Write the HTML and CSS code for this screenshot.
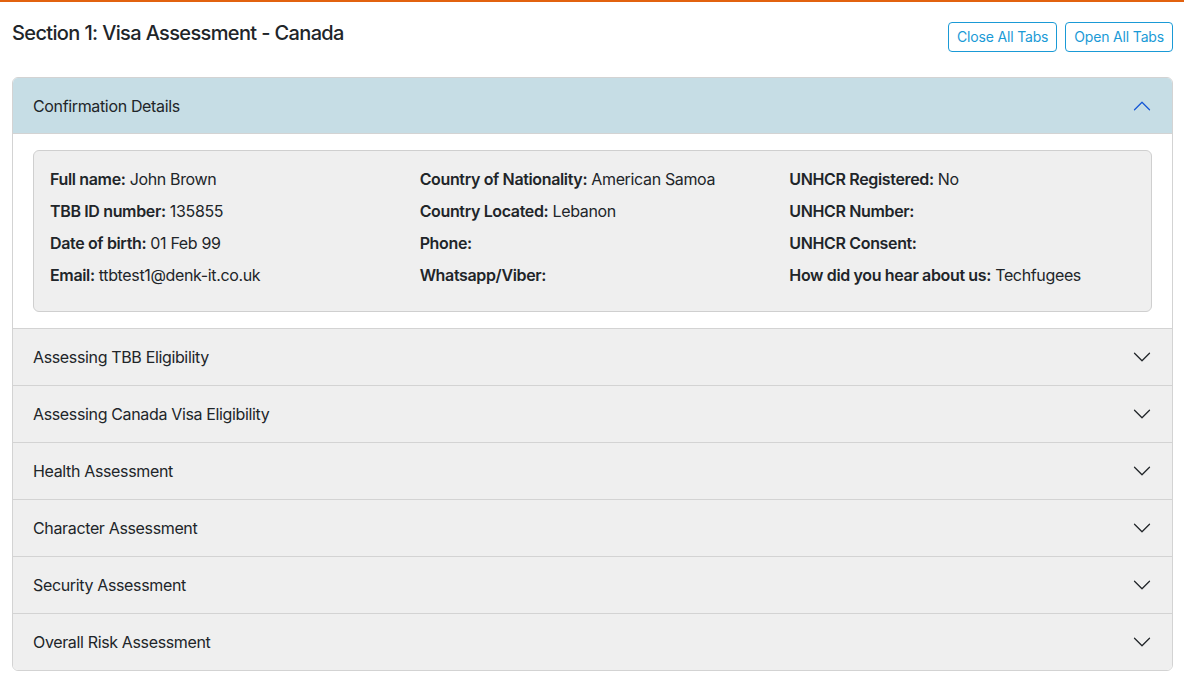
FILE: index.html
```html
<!DOCTYPE html>
<html>
<head>
<meta charset="utf-8">
<link rel="stylesheet" href="styles.css">
</head>
<body>
<div class="page">
  <div class="page-head">
    <h5 class="title">Section 1: Visa Assessment - Canada</h5>
    <div class="actions">
      <button class="btn-outline">Close All Tabs</button>
      <button class="btn-outline">Open All Tabs</button>
    </div>
  </div>

  <div class="accordion">
    <div class="acc-item">
      <div class="acc-btn open">
        <span>Confirmation Details</span>
        <svg class="chev" viewBox="0 0 16 16" fill="none" stroke="currentColor" stroke-linecap="round" stroke-linejoin="round"><path d="M2 11L8 5L14 11"/></svg>
      </div>
      <div class="acc-body">
        <div class="card">
          <div class="grid">
            <div class="col">
              <p><b>Full name:</b> John Brown</p>
              <p><b>TBB ID number:</b> 135855</p>
              <p><b>Date of birth:</b> 01 Feb 99</p>
              <p><b>Email:</b> ttbtest1@denk-it.co.uk</p>
            </div>
            <div class="col">
              <p><b>Country of Nationality:</b> American Samoa</p>
              <p><b>Country Located:</b> Lebanon</p>
              <p><b>Phone:</b> </p>
              <p><b>Whatsapp/Viber:</b> </p>
            </div>
            <div class="col">
              <p><b>UNHCR Registered:</b> No</p>
              <p><b>UNHCR Number:</b> </p>
              <p><b>UNHCR Consent:</b> </p>
              <p><b>How did you hear about us:</b> Techfugees</p>
            </div>
          </div>
        </div>
      </div>
    </div>
    <div class="acc-item"><div class="acc-btn"><span>Assessing TBB Eligibility</span><svg class="chev" viewBox="0 0 16 16" fill="none" stroke="currentColor" stroke-linecap="round" stroke-linejoin="round"><path d="M2 5L8 11L14 5"/></svg></div></div>
    <div class="acc-item"><div class="acc-btn"><span>Assessing Canada Visa Eligibility</span><svg class="chev" viewBox="0 0 16 16" fill="none" stroke="currentColor" stroke-linecap="round" stroke-linejoin="round"><path d="M2 5L8 11L14 5"/></svg></div></div>
    <div class="acc-item"><div class="acc-btn"><span>Health Assessment</span><svg class="chev" viewBox="0 0 16 16" fill="none" stroke="currentColor" stroke-linecap="round" stroke-linejoin="round"><path d="M2 5L8 11L14 5"/></svg></div></div>
    <div class="acc-item"><div class="acc-btn"><span>Character Assessment</span><svg class="chev" viewBox="0 0 16 16" fill="none" stroke="currentColor" stroke-linecap="round" stroke-linejoin="round"><path d="M2 5L8 11L14 5"/></svg></div></div>
    <div class="acc-item"><div class="acc-btn"><span>Security Assessment</span><svg class="chev" viewBox="0 0 16 16" fill="none" stroke="currentColor" stroke-linecap="round" stroke-linejoin="round"><path d="M2 5L8 11L14 5"/></svg></div></div>
    <div class="acc-item"><div class="acc-btn"><span>Overall Risk Assessment</span><svg class="chev" viewBox="0 0 16 16" fill="none" stroke="currentColor" stroke-linecap="round" stroke-linejoin="round"><path d="M2 5L8 11L14 5"/></svg></div></div>
  </div>
</div>
</body>
</html>
```

FILE: styles.css
```css
* { box-sizing: border-box; }
html, body { margin: 0; padding: 0; }
body {
  font-family: Inter, "Noto Sans", "Liberation Sans", sans-serif;
  font-size: 16px;
  line-height: 1.5;
  letter-spacing: -0.022em;
  color: #212529;
  background: #fff;
  border-top: 2px solid #e2620f;
}
.page { padding: 0 11px 0 12px; }
.page-head {
  display: flex;
  justify-content: space-between;
  align-items: flex-start;
  padding-top: 19px;
  margin-bottom: 25px;
}
.title {
  margin: 0;
  font-size: 20px;
  font-weight: 500;
  line-height: 24px;
  letter-spacing: -0.032em;
}
.actions { display: flex; gap: 8px; margin-top: 1px; }
.btn-outline {
  font-family: inherit;
  font-size: 14px;
  line-height: 20px;
  letter-spacing: -0.012em;
  padding: 4px 8px;
  background: #fff;
  color: #1a9ad6;
  border: 1px solid #1a9ad6;
  border-radius: 4px;
}
.accordion {
  border: 1px solid #d3d3d3;
  border-radius: 6px;
  overflow: hidden;
}
.acc-item + .acc-item { border-top: 1px solid #d3d3d3; }
.acc-btn {
  display: flex;
  align-items: center;
  justify-content: space-between;
  padding: 16px 20px;
  background: #efefef;
  color: #212529;
  height: 56px;
}
.acc-btn.open {
  background: #c6dde5;
  box-shadow: inset 0 -1px 0 #d3d3d3;
}
.chev { width: 20px; height: 20px; stroke-width: 1; color: #212529; }
.acc-btn.open .chev { color: #1658d6; }
.acc-body { padding: 16px 20px; background: #fff; }
.card {
  background: #efefef;
  border: 1px solid #cfcfcf;
  border-radius: 6px;
  padding: 16px;
}
.grid {
  display: grid;
  grid-template-columns: 1fr 1fr 1fr;
  column-gap: 24px;
}
.col p { margin: 0 0 8px; }
.col b { font-weight: 600; }
```
